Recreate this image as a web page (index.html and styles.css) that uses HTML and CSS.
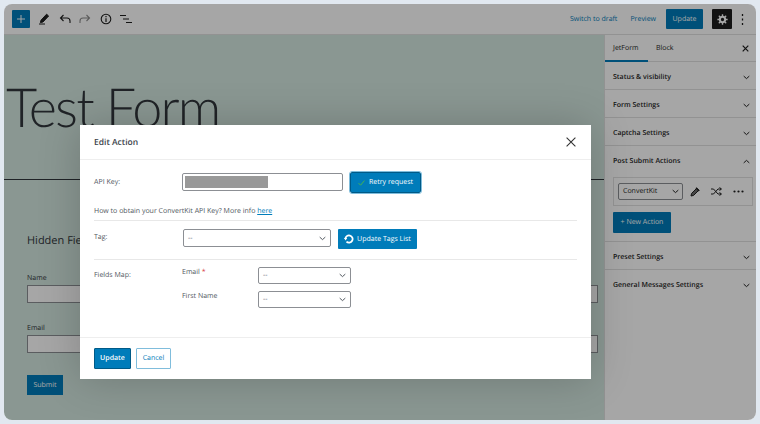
FILE: index.html
```html
<!DOCTYPE html>
<html lang="en">
<head>
    <meta charset="UTF-8">
    <title>Edit Action</title>
    <link rel="stylesheet" href="styles.css">
</head>
<body>
    <svg class="defs" width="0" height="0">
        <symbol id="chev" viewBox="0 0 10 6"><path d="M1 1l4 3.6L9 1" fill="none" stroke="currentColor" stroke-width="1.4"/></symbol>
    </svg>
    <div class="window">
        <header class="toolbar">
            <button class="add-btn">
                <svg width="8" height="8" viewBox="0 0 8 8"><path d="M4 0v8M0 4h8" stroke="#fff" stroke-width="1"/></svg>
            </button>
            <div class="tools">
                <svg width="12" height="12" viewBox="0 0 12 12"><path d="M3 7.2L8.6 1.2l2 1.8L5 9l-2.6.6zM1 11h6" fill="#1e1e1e" stroke="#1e1e1e" stroke-width="1"/></svg>
                <svg width="12" height="10" viewBox="0 0 12 10"><path d="M4.5 1L1.5 4l3 3M1.5 4H8a3 3 0 0 1 3 3v2" fill="none" stroke="#1e1e1e" stroke-width="1.1"/></svg>
                <svg width="12" height="10" viewBox="0 0 12 10"><path d="M7.5 1l3 3-3 3M10.5 4H4a3 3 0 0 0-3 3v2" fill="none" stroke="#8c8c8c" stroke-width="1.1"/></svg>
                <svg width="12" height="12" viewBox="0 0 12 12"><circle cx="6" cy="6" r="4.8" fill="none" stroke="#1e1e1e" stroke-width="1.1"/><path d="M6 5.2V9M6 3v1.3" stroke="#1e1e1e" stroke-width="1.2"/></svg>
                <svg width="12" height="10" viewBox="0 0 12 10"><path d="M0 1.5h6M3 5h6M6 8.5h6" stroke="#1e1e1e" stroke-width="1.2"/></svg>
            </div>
            <div class="top-actions">
                <a class="top-link">Switch to draft</a>
                <a class="top-link">Preview</a>
                <button class="top-update">Update</button>
                <button class="gear-btn">
                    <svg width="11" height="11" viewBox="0 0 12 12"><circle cx="6" cy="6" r="2.9" fill="none" stroke="#fff" stroke-width="2.2"/><path d="M6 .4v2M6 9.6v2M.4 6h2M9.6 6h2M2 2l1.4 1.4M8.6 8.6L10 10M2 10l1.4-1.4M8.6 3.4L10 2" stroke="#fff" stroke-width="1.5"/></svg>
                </button>
                <svg class="dots" width="3" height="11" viewBox="0 0 3 11"><path d="M1.5 0v2M1.5 4.5v2M1.5 9v2" stroke="#1e1e1e" stroke-width="1.3"/></svg>
            </div>
        </header>

        <div class="workspace">
            <main class="canvas">
                <h1 class="post-title">Test Form</h1>
                <hr class="post-rule">
                <div class="form-preview">
                    <h2>Hidden Field</h2>
                    <label class="preview-label">Name</label>
                    <div class="preview-input"></div>
                    <label class="preview-label second">Email</label>
                    <div class="preview-input"></div>
                    <button class="preview-submit">Submit</button>
                </div>
            </main>

            <aside class="sidebar">
                <div class="tabs">
                    <span class="tab active">JetForm</span>
                    <span class="tab">Block</span>
                    <svg class="tab-close" width="7" height="7" viewBox="0 0 7 7"><path d="M.7.7l5.6 5.6M6.3.7L.7 6.3" stroke="#1e1e1e" stroke-width="1.2"/></svg>
                </div>
                <div class="panel"><span>Status &amp; visibility</span><svg class="chev"><use href="#chev"/></svg></div>
                <div class="panel"><span>Form Settings</span><svg class="chev"><use href="#chev"/></svg></div>
                <div class="panel"><span>Captcha Settings</span><svg class="chev"><use href="#chev"/></svg></div>
                <div class="panel-open">
                    <div class="panel-head"><span>Post Submit Actions</span><svg class="chev flip"><use href="#chev"/></svg></div>
                    <div class="action-box">
                        <div class="select action-select"><span>ConvertKit</span><svg class="chev"><use href="#chev"/></svg></div>
                        <svg width="10" height="10" viewBox="0 0 10 10"><path d="M1 9l.6-2.600L6.800 1.200l2 2L3.600 8.400z" fill="#6b6b6b" stroke="#1e1e1e" stroke-width="1"/><path d="M6 .8l3.200 3.200" stroke="#1e1e1e" stroke-width="1.400"/></svg>
                        <svg width="11" height="9" viewBox="0 0 11 9"><path d="M0 2h2.500l4.500 5h3M0 7h2.500l4.500-5h3M8.500.5L10.500 2l-2 1.500M8.500 5.500l2 1.500-2 1.500" fill="none" stroke="#1e1e1e" stroke-width="1"/></svg>
                        <svg width="11" height="3" viewBox="0 0 11 3"><circle cx="1.500" cy="1.500" r="1.100" fill="#1e1e1e"/><circle cx="5.500" cy="1.500" r="1.100" fill="#1e1e1e"/><circle cx="9.500" cy="1.500" r="1.100" fill="#1e1e1e"/></svg>
                    </div>
                    <button class="new-action">+ New Action</button>
                </div>
                <div class="panel"><span>Preset Settings</span><svg class="chev"><use href="#chev"/></svg></div>
                <div class="panel plain"><span>General Messages Settings</span><svg class="chev"><use href="#chev"/></svg></div>
            </aside>
        </div>

        <div class="scrim"></div>
    </div>

    <section class="modal">
        <div class="modal-head">
            <span class="modal-title">Edit Action</span>
            <svg width="10" height="10" viewBox="0 0 10 10"><path d="M.6.6l8.800 8.800M9.400.6L.6 9.400" stroke="#333" stroke-width="1.1"/></svg>
        </div>
        <div class="modal-body">
            <div class="row key-row">
                <label class="row-label">API Key:</label>
                <div class="key-input"><div class="key-mask"></div></div>
                <button class="retry-btn">
                    <svg width="7" height="6" viewBox="0 0 7 6"><path d="M.6 3.200L2.600 5.200 6.400.6" fill="none" stroke="#46b450" stroke-width="1"/></svg>
                    Retry request
                </button>
            </div>
            <p class="help">How to obtain your ConvertKit API Key? More info <a href="#">here</a></p>
            <div class="row tag-row">
                <label class="row-label">Tag:</label>
                <div class="select tag-select"><span>--</span><svg class="chev"><use href="#chev"/></svg></div>
                <button class="tags-btn">
                    <svg width="10" height="10" viewBox="0 0 10 10"><path d="M1.400 5a3.600 3.600 0 1 1 1.100 2.600" fill="none" stroke="#fff" stroke-width="1.800"/><path d="M0 4h3.200L1.600 6.400z" fill="#fff"/></svg>
                    Update Tags List
                </button>
            </div>
            <div class="row map-row">
                <label class="row-label">Fields Map:</label>
                <div class="map-fields">
                    <div class="map-field">
                        <span class="map-name">Email <b>*</b></span>
                        <div class="select map-select"><span>--</span><svg class="chev"><use href="#chev"/></svg></div>
                    </div>
                    <div class="map-field">
                        <span class="map-name">First Name</span>
                        <div class="select map-select"><span>--</span><svg class="chev"><use href="#chev"/></svg></div>
                    </div>
                </div>
            </div>
        </div>
        <div class="modal-foot">
            <button class="foot-update">Update</button>
            <button class="foot-cancel">Cancel</button>
        </div>
    </section>
</body>
</html>
```

FILE: styles.css
```css
* {
    box-sizing: border-box;
}
body {
    margin: 0;
    width: 760px;
    height: 424px;
    padding: 4px;
    overflow: hidden;
    position: relative;
    background: #e1e8f0;
    font-family: 'Open Sans', sans-serif;
    font-size: 7px;
    text-rendering: geometricPrecision;
    color: #1e1e1e;
}
button {
    font-family: inherit;
    text-rendering: inherit;
    border: none;
    padding: 0;
}
.defs {
    position: absolute;
}
.window {
    position: relative;
    width: 752px;
    height: 416px;
    border-radius: 8px;
    overflow: hidden;
    background: #fff;
    display: flex;
    flex-direction: column;
}
.scrim {
    position: absolute;
    inset: 0;
    background: rgba(0, 0, 0, 0.35);
}

/* top bar */
.toolbar {
    height: 31px;
    flex: none;
    display: flex;
    align-items: center;
    padding: 0 8px;
    border-bottom: 1px solid #e0e0e0;
}
.add-btn {
    width: 18px;
    height: 18px;
    border-radius: 1px;
    background: #007cba;
    display: flex;
    align-items: center;
    justify-content: center;
}
.tools {
    display: flex;
    align-items: center;
    gap: 8.500px;
    margin-left: 8px;
}
.top-actions {
    margin-left: auto;
    display: flex;
    align-items: center;
}
.top-link {
    color: #007cba;
    font-size: 7px;
    margin-right: 14px;
}
.top-link:first-child {
    margin-right: 13px;
}
.top-update {
    width: 37px;
    height: 20px;
    margin-left: -4px;
    background: #007cba;
    color: #fff;
    font-size: 7px;
    border-radius: 1px;
}
.gear-btn {
    width: 20px;
    height: 20px;
    margin-left: 9px;
    background: #1e1e1e;
    border-radius: 1px;
    display: flex;
    align-items: center;
    justify-content: center;
}
.dots {
    margin: 0 4px 0 9px;
}

.workspace {
    flex: 1;
    display: flex;
    min-height: 0;
}

/* page behind the modal */
.canvas {
    flex: 1;
    background: #d4e8e0;
}
.post-title {
    margin: 47px 0 0 2px;
    font-family: Lato, sans-serif;
    font-size: 54px;
    letter-spacing: -1.800px;
    line-height: 50px;
    font-weight: 300;
    color: #32373c;
}
.post-rule {
    margin: 47px 0 0;
    border: none;
    border-top: 1.500px solid #32373c;
}
.form-preview {
    padding: 0 6px 0 23px;
}
.form-preview h2 {
    margin: 53px 0 0;
    font-size: 11px;
    line-height: 16px;
    font-weight: 400;
    color: #32373c;
}
.preview-label {
    display: block;
    margin-top: 24px;
    font-size: 7px;
    line-height: 12px;
    color: #32373c;
}
.preview-label.second {
    margin-top: 20px;
}
.preview-input {
    height: 18px;
    background: #fff;
    border: 1px solid #8c8f94;
}
.preview-submit {
    display: block;
    width: 36px;
    height: 20px;
    margin-top: 22px;
    background: #007cba;
    color: #fff;
    font-size: 7px;
}

/* settings sidebar */
.sidebar {
    width: 152px;
    flex: none;
    background: #fff;
    border-left: 1px solid #e0e0e0;
    font-size: 7px;
    font-weight: 600;
}
.tabs {
    height: 27px;
    display: flex;
    align-items: center;
    border-bottom: 1px solid #e0e0e0;
    position: relative;
}
.tab {
    height: 27px;
    line-height: 27px;
    padding: 0 8px;
    font-weight: 500;
}
.tab.active {
    width: 43px;
    border-bottom: 2px solid #007cba;
}
.tab + .tab {
    padding-left: 8px;
}
.tab-close {
    margin-left: auto;
    margin-right: 7px;
}
.panel, .panel-head {
    height: 28px;
    display: flex;
    align-items: center;
    justify-content: space-between;
    padding: 3px 6px 0 8px;
    border-bottom: 1px solid #e0e0e0;
}
.panel.plain {
    border-bottom: none;
}
.panel-head {
    border-bottom: none;
}
.chev {
    width: 7px;
    height: 5px;
    flex: none;
}
.flip {
    transform: rotate(180deg);
}
.panel-open {
    height: 96px;
    border-bottom: 1px solid #e0e0e0;
}
.action-box {
    margin: 3px 3px 0 8px;
    height: 29px;
    border: 1px solid #e0e0e0;
    display: flex;
    align-items: center;
    padding-left: 4px;
    gap: 11px;
}
.select {
    display: flex;
    align-items: center;
    justify-content: space-between;
    background: #fff;
    border: 1px solid #8c8f94;
    border-radius: 2px;
    font-weight: 400;
    font-size: 7px;
}
.action-select {
    width: 65px;
    height: 17px;
    padding: 0 3px 0 4px;
    margin-right: -4px;
}
.new-action {
    display: block;
    width: 58px;
    height: 21px;
    margin: 6px 0 0 8px;
    background: #007cba;
    color: #fff;
    font-size: 7px;
    border-radius: 1px;
}

/* modal */
.modal {
    position: absolute;
    left: 80px;
    top: 125px;
    width: 511px;
    height: 254px;
    background: #fff;
    box-shadow: 0 0 40px rgba(0, 0, 0, 0.2);
    display: flex;
    flex-direction: column;
    color: #50575e;
}
.modal-head {
    height: 35px;
    flex: none;
    display: flex;
    align-items: center;
    justify-content: space-between;
    padding: 0 15px 0 14px;
    border-bottom: 1px solid #eee;
}
.modal-title {
    font-size: 8.500px;
    font-weight: 600;
    color: #3c434a;
}
.modal-body {
    flex: 1;
    padding: 0 14px;
}
.row {
    display: flex;
    align-items: center;
}
.row-label {
    width: 88px;
    flex: none;
    font-size: 7px;
}
.key-row {
    height: 21px;
    margin-top: 12px;
}
.key-row .row-label {
    margin-top: -1px;
}
.key-input {
    width: 161px;
    height: 18px;
    margin-top: -1px;
    border: 1px solid #8c8f94;
    border-radius: 2px;
    padding: 2px;
}
.key-mask {
    width: 83px;
    height: 12px;
    background: #999;
}
.retry-btn {
    width: 71px;
    height: 21px;
    margin-left: 7px;
    background: #007cba;
    color: #fff;
    font-size: 7px;
    font-weight: 500;
    border: 1px solid #005a87;
    outline: 1px solid #7fbddc;
    border-radius: 2px;
    display: flex;
    align-items: center;
    justify-content: center;
    gap: 4px;
}
.help {
    margin: 13px 0 0;
    height: 14px;
    line-height: 12px;
    border-bottom: 1px solid #e8e8e8;
    font-size: 7px;
    box-sizing: content-box;
    padding-bottom: 0;
}
.help a {
    color: #007cba;
    text-decoration: underline;
}
.tag-row {
    height: 39px;
    padding-top: 8px;
    padding-bottom: 11px;
    border-bottom: 1px solid #e8e8e8;
    align-items: flex-start;
}
.tag-row .row-label {
    line-height: 17px;
}
.tag-select {
    width: 148px;
    height: 18px;
    margin-left: 1px;
    padding: 0 4px;
}
.tags-btn {
    width: 79px;
    height: 20px;
    margin-left: 7px;
    background: #007cba;
    color: #fff;
    font-size: 7px;
    font-weight: 500;
    border-radius: 1px;
    display: flex;
    align-items: center;
    justify-content: center;
    gap: 3px;
}
.map-row {
    align-items: flex-start;
    padding-top: 7px;
}
.map-row .row-label {
    line-height: 18px;
}
.map-fields {
    display: flex;
    flex-direction: column;
    gap: 7px;
}
.map-field {
    display: flex;
    align-items: flex-start;
}
.map-name {
    width: 76px;
    font-size: 7px;
    line-height: 11px;
}
.map-name b {
    color: #d63638;
    font-weight: 400;
}
.map-select {
    width: 93px;
    height: 17px;
    padding: 0 4px;
}
.modal-foot {
    height: 42px;
    flex: none;
    display: flex;
    align-items: center;
    gap: 5px;
    padding: 0 14px;
    border-top: 1px solid #eee;
}
.foot-update {
    width: 37px;
    height: 21px;
    background: #007cba;
    color: #fff;
    font-size: 7px;
    font-weight: 600;
    border: 1px solid #005a87;
    border-radius: 1px;
}
.foot-cancel {
    width: 35px;
    height: 21px;
    background: #fff;
    color: #007cba;
    font-size: 7px;
    border: 1px solid #80bddc;
    border-radius: 1px;
}
```
